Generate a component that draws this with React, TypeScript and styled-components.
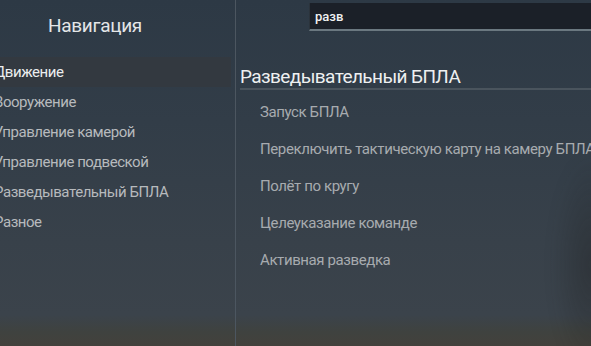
import React from "react";
import styled, { createGlobalStyle } from "styled-components";

const Global = createGlobalStyle`
  html, body { margin: 0; padding: 0; }
  body {
    width: 591px;
    height: 346px;
    overflow: hidden;
    font-family: "Roboto", "Liberation Sans", sans-serif;
  }
`;

const Screen = styled.div`
  position: relative;
  width: 591px;
  height: 346px;
  overflow: hidden;
  display: flex;
  background: linear-gradient(
    180deg,
    #2d3945 0%,
    #323d48 35%,
    #38414a 70%,
    #3b434b 91%,
    #3f423f 96%,
    #43413c 100%
  );
`;

const Shade = styled.div`
  position: absolute;
  right: -40px;
  top: 150px;
  width: 80px;
  height: 230px;
  border-radius: 50%;
  background: radial-gradient(ellipse at center, rgba(28, 28, 28, 0.35) 0%, rgba(28, 28, 28, 0) 70%);
  filter: blur(6px);
  pointer-events: none;
`;

const LeftPanel = styled.div`
  width: 235px;
  flex: none;
  border-right: 1px solid #4c5660;
  display: flex;
  flex-direction: column;
`;

const NavTitle = styled.div`
  height: 50px;
  display: flex;
  align-items: center;
  padding-left: 48px;
  font-size: 19px;
  letter-spacing: -0.3px;
  color: #e4e6e8;
`;

const NavList = styled.div`
  margin-top: 7px;
  display: flex;
  flex-direction: column;
  padding-right: 4px;
`;

const NavItem = styled.div<{ $active?: boolean }>`
  height: 30px;
  display: flex;
  align-items: center;
  text-indent: -6px;
  font-size: 15px;
  letter-spacing: -0.45px;
  color: ${(p) => (p.$active ? "#eceeef" : "#b7babd")};
  background: ${(p) => (p.$active ? "#333940" : "transparent")};
`;

const RightPanel = styled.div`
  flex: 1;
  display: flex;
  flex-direction: column;
  padding-left: 4px;
  min-width: 0;
`;

const SearchBox = styled.div`
  margin: 3px -10px 0 69px;
  height: 26px;
  background: #1b2028;
  border-bottom: 2px solid #6b7880;
  border-left: 1px solid #2b333b;
  display: flex;
  align-items: center;
  padding-left: 5px;
  font-size: 13px;
  font-weight: 500;
  color: #f0f1f2;
`;

const SectionTitle = styled.div`
  margin-top: 34px;
  margin-right: -20px;
  height: 23px;
  display: flex;
  align-items: center;
  font-size: 19px;
  letter-spacing: -0.6px;
  color: #eef0f1;
  border-bottom: 2px solid #4a545d;
  white-space: nowrap;
`;

const ActionList = styled.div`
  margin-top: 4px;
  display: flex;
  flex-direction: column;
`;

const ActionItem = styled.div`
  height: 36.8px;
  display: flex;
  align-items: center;
  padding-left: 20px;
  font-size: 15px;
  letter-spacing: -0.4px;
  color: #a7abaf;
  white-space: nowrap;
`;

const navItems = [
  "Движение",
  "Вооружение",
  "Управление камерой",
  "Управление подвеской",
  "Разведывательный БПЛА",
  "Разное",
];

const actions = [
  "Запуск БПЛА",
  "Переключить тактическую карту на камеру БПЛА",
  "Полёт по кругу",
  "Целеуказание команде",
  "Активная разведка",
];

export default function App() {
  return (
    <>
      <Global />
      <Screen>
        <LeftPanel>
          <NavTitle>Навигация</NavTitle>
          <NavList>
            {navItems.map((t, i) => (
              <NavItem key={t} $active={i === 0}>
                {t}
              </NavItem>
            ))}
          </NavList>
        </LeftPanel>
        <RightPanel>
          <SearchBox>разв</SearchBox>
          <SectionTitle>Разведывательный БПЛА</SectionTitle>
          <ActionList>
            {actions.map((a) => (
              <ActionItem key={a}>{a}</ActionItem>
            ))}
          </ActionList>
        </RightPanel>
        <Shade />
      </Screen>
    </>
  );
}
